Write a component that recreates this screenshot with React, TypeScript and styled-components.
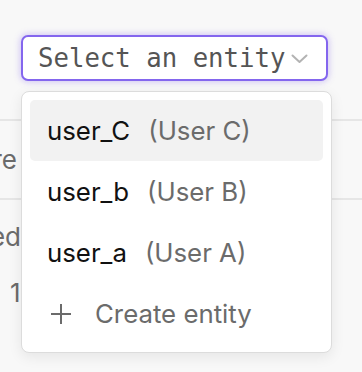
import styled, { createGlobalStyle } from "styled-components";

const GlobalStyle = createGlobalStyle`
  html, body {
    margin: 0;
    padding: 0;
    background: #f8f8f8;
  }
  body {
    font-family: Inter, "Noto Sans", sans-serif;
  }
`;

type Entity = {
  id: string;
  name: string;
};

const entities: Entity[] = [
  { id: "user_C", name: "User C" },
  { id: "user_b", name: "User B" },
  { id: "user_a", name: "User A" },
];

const App = () => {
  return (
    <>
      <GlobalStyle />
      <Page>
        <Trigger type="button">
          <span>Select an entity</span>
          <Chevron width="17" height="10" viewBox="0 0 17 10">
            <path d="M1.5 1.5 L8.5 8 L15.5 1.5" />
          </Chevron>
        </Trigger>

        <Table>
          <Row $height={77} $border>
            <ClipCell $width={17}>Store</ClipCell>
          </Row>
          <Row $height={72}>
            <ClipCell $width={21}>Created</ClipCell>
          </Row>
          <Row $height={40}>
            <Cell $indent={10}>12:04</Cell>
          </Row>
        </Table>

        <Menu>
          {entities.map((entity, i) => (
            <Item key={entity.id} $active={i === 0}>
              <Id>{entity.id}</Id>
              <Name>({entity.name})</Name>
            </Item>
          ))}
          <Item>
            <PlusIcon width="22" height="22" viewBox="0 0 22 22">
              <path d="M11 1 V21 M1 11 H21" />
            </PlusIcon>
            <CreateLabel>Create entity</CreateLabel>
          </Item>
        </Menu>
      </Page>
    </>
  );
};

export default App;

const Page = styled.div`
  position: relative;
  width: 362px;
  height: 372px;
  overflow: hidden;
  padding-top: 35px;
  box-sizing: border-box;
`;

const Trigger = styled.button`
  display: flex;
  align-items: center;
  justify-content: space-between;
  box-sizing: border-box;
  width: 307px;
  height: 46px;
  margin-left: 21px;
  padding: 0 18px 0 15px;
  background: #fff;
  border: 2px solid #8466ee;
  border-radius: 7px;
  box-shadow: 0 0 6px 1px rgba(132, 102, 238, 0.35);
  font-family: "DejaVu Sans Mono", monospace;
  font-size: 25.7px;
  color: #555;
  cursor: pointer;
  white-space: nowrap;
`;

const Chevron = styled.svg`
  flex-shrink: 0;
  margin-top: 2px;
  fill: none;
  stroke: #b3b3b3;
  stroke-width: 2;
  stroke-linecap: round;
  stroke-linejoin: round;
`;

const Table = styled.div`
  margin-top: 38px;
  border-top: 2px solid #e6e6e6;
  display: flex;
  flex-direction: column;
`;

const Row = styled.div<{ $height: number; $border?: boolean }>`
  display: flex;
  align-items: center;
  height: ${(p) => p.$height}px;
  border-bottom: ${(p) => (p.$border ? "2px solid #e6e6e6" : "none")};
  font-size: 26px;
  color: #6b6b6b;
`;

const ClipCell = styled.div<{ $width: number }>`
  width: ${(p) => p.$width}px;
  overflow: hidden;
  display: flex;
  justify-content: flex-end;
  white-space: nowrap;
`;

const Cell = styled.div<{ $indent: number }>`
  padding-left: ${(p) => p.$indent}px;
  white-space: nowrap;
`;

const Menu = styled.div`
  position: absolute;
  top: 91px;
  left: 21px;
  width: 311px;
  box-sizing: border-box;
  padding: 8px;
  background: #fff;
  border: 1px solid #dcdcdc;
  border-radius: 8px;
  box-shadow: 0 4px 14px rgba(0, 0, 0, 0.08);
  display: flex;
  flex-direction: column;
`;

const Item = styled.div<{ $active?: boolean }>`
  display: flex;
  align-items: center;
  height: 61px;
  padding-left: 17px;
  border-radius: 5px;
  background: ${(p) => (p.$active ? "#f2f2f2" : "transparent")};
  font-size: 25.8px;
  cursor: pointer;
`;

const Id = styled.span`
  color: #111;
`;

const Name = styled.span`
  margin-left: 18px;
  color: #6b6b6b;
`;

const PlusIcon = styled.svg`
  margin-left: 3px;
  flex-shrink: 0;
  fill: none;
  stroke: #6b6b6b;
  stroke-width: 2;
`;

const CreateLabel = styled.span`
  margin-left: 23px;
  color: #6b6b6b;
`;
